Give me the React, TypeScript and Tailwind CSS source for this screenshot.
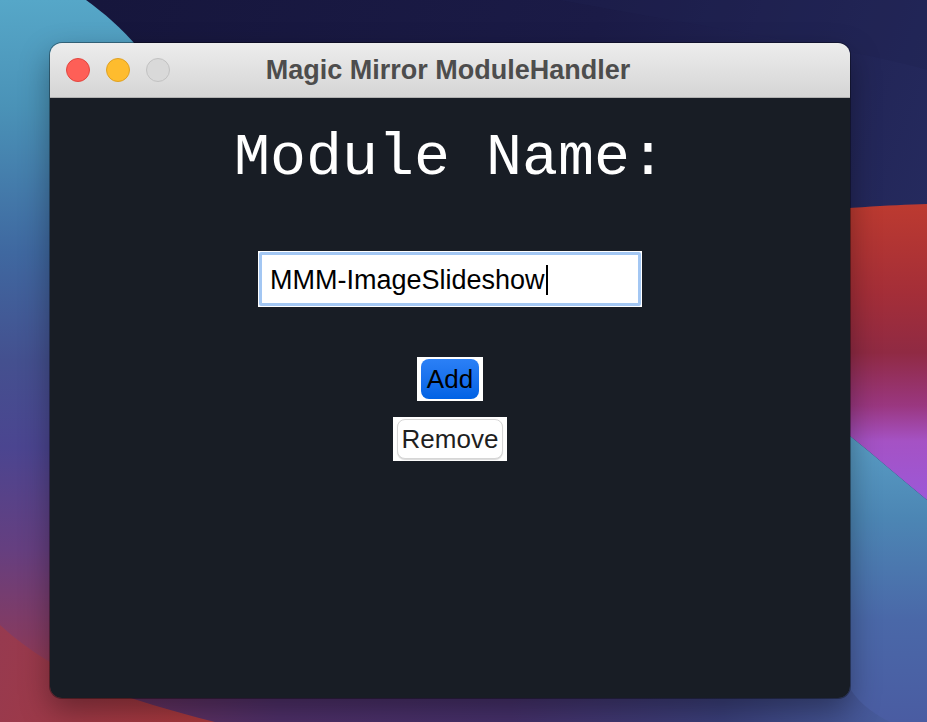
function Wallpaper() {
  return (
    <svg
      className="absolute inset-0"
      width="927"
      height="722"
      viewBox="0 0 927 722"
    >
      <defs>
        <linearGradient id="navy" x1="0" y1="0" x2="1" y2="0.3">
          <stop offset="0" stopColor="#15153a" />
          <stop offset="0.6" stopColor="#1b1b47" />
          <stop offset="1" stopColor="#252a5e" />
        </linearGradient>
        <linearGradient id="leftBand" x1="0" y1="0" x2="0" y2="722" gradientUnits="userSpaceOnUse">
          <stop offset="0" stopColor="#56a7c8" />
          <stop offset="0.15" stopColor="#4a92b7" />
          <stop offset="0.35" stopColor="#3f68a0" />
          <stop offset="0.5" stopColor="#44508f" />
          <stop offset="0.62" stopColor="#4b4590" />
          <stop offset="0.76" stopColor="#653f80" />
          <stop offset="0.88" stopColor="#843b62" />
          <stop offset="1" stopColor="#a8393f" />
        </linearGradient>
        <linearGradient id="redBand" x1="0" y1="205" x2="0" y2="500" gradientUnits="userSpaceOnUse">
          <stop offset="0" stopColor="#bc3a30" />
          <stop offset="0.3" stopColor="#a42e38" />
          <stop offset="0.5" stopColor="#902a43" />
          <stop offset="0.68" stopColor="#9a3780" />
          <stop offset="0.8" stopColor="#a552c4" />
          <stop offset="1" stopColor="#9c58d8" />
        </linearGradient>
        <linearGradient id="cyanBand" x1="0" y1="430" x2="0" y2="722" gradientUnits="userSpaceOnUse">
          <stop offset="0" stopColor="#5a9fc6" />
          <stop offset="0.3" stopColor="#4c86b4" />
          <stop offset="0.65" stopColor="#4a68a8" />
          <stop offset="1" stopColor="#4a5ca2" />
        </linearGradient>
        <linearGradient id="bottomBand" x1="0" y1="0" x2="927" y2="0" gradientUnits="userSpaceOnUse">
          <stop offset="0" stopColor="#7a3358" />
          <stop offset="0.3" stopColor="#4e2f68" />
          <stop offset="0.55" stopColor="#45306a" />
          <stop offset="0.78" stopColor="#3a3f7a" />
          <stop offset="1" stopColor="#4a62a4" />
        </linearGradient>
        <linearGradient id="redCorner" x1="0" y1="620" x2="200" y2="722" gradientUnits="userSpaceOnUse">
          <stop offset="0" stopColor="#963a50" />
          <stop offset="1" stopColor="#a8383c" />
        </linearGradient>
      </defs>
      <rect width="927" height="722" fill="url(#navy)" />
      <path d="M560 0 C 720 30, 860 50, 927 70 L927 0 Z" fill="#20224f" opacity="0.35" />
      <rect x="0" y="680" width="927" height="42" fill="url(#bottomBand)" />
      <path d="M0 0 L86 0 C 120 25, 160 60, 190 140 L120 722 L0 722 Z" fill="url(#leftBand)" />
      <path d="M0 625 C 60 680, 130 700, 215 722 L0 722 Z" fill="url(#redCorner)" />
      <path d="M780 214 C 840 208, 890 205, 927 204 L927 500 C 900 478, 875 456, 850 436 L780 380 Z" fill="url(#redBand)" />
      <path d="M780 380 L850 436 C 875 456, 900 478, 927 500 L927 722 L890 722 C 870 712, 855 700, 845 680 Z" fill="url(#cyanBand)" />
    </svg>
  );
}

function TrafficLights() {
  return (
    <div className="flex items-center gap-[16px] pl-[16px]">
      <span className="w-[24px] h-[24px] rounded-full bg-[#fe5f57] border border-[#e2463f]" />
      <span className="w-[24px] h-[24px] rounded-full bg-[#febc2e] border border-[#dfa123]" />
      <span className="w-[24px] h-[24px] rounded-full bg-[#d9d9d9] border border-[#c2c2c2]" />
    </div>
  );
}

function TitleBar() {
  return (
    <div className="h-[55px] shrink-0 grid grid-cols-[1fr_auto_1fr] items-center border-b border-[#b1b1b1] bg-linear-to-b from-[#ededed] to-[#d5d5d5]">
      <TrafficLights />
      <span className="font-['Liberation_Sans',Arial,sans-serif] font-bold text-[27px] leading-none text-[#4d4d4d] mr-[4px]">
        Magic Mirror ModuleHandler
      </span>
      <span />
    </div>
  );
}

export default function App() {
  return (
    <div className="relative w-[927px] h-[722px] overflow-hidden bg-[#1a1a44]">
      <Wallpaper />
      <div className="absolute left-[50px] top-[43px] w-[800px] h-[655px] rounded-[12px] overflow-hidden flex flex-col shadow-[0_0_0_1px_rgba(0,0,0,0.35),0_12px_30px_rgba(0,0,0,0.35)]">
        <TitleBar />
        <main className="flex-1 bg-[#181d25] flex flex-col items-center font-['Liberation_Sans',Arial,sans-serif]">
          <h1 className="mt-[30px] font-['Liberation_Mono','Courier_New',monospace] text-[60px] leading-[60px] text-white">
            Module Name:
          </h1>

          <div className="mt-[63px] w-[384px] h-[56px] bg-white p-[1px]">
            <div className="w-full h-full flex items-center border-[3px] border-[#a3c7f3] rounded-[2px] px-[8px] pt-[2px] text-[27px] text-black">
              <span>MMM-ImageSlideshow</span>
              <span className="ml-[1px] w-[2px] h-[30px] bg-black" />
            </div>
          </div>

          <div className="mt-[50px] bg-white px-[4px] py-[2px]">
            <button className="w-[58px] h-[40px] rounded-[8px] bg-linear-to-b from-[#2b80f6] to-[#0062e4] text-[26px] leading-none text-black">
              Add
            </button>
          </div>

          <div className="mt-[16px] bg-white px-[4px] py-[2px]">
            <button className="w-[106px] h-[40px] rounded-[8px] bg-white border border-[#d6d6d6] shadow-[0_1px_1px_rgba(0,0,0,0.15)] text-[26px] leading-none text-[#1f1f1f]">
              Remove
            </button>
          </div>
        </main>
      </div>
    </div>
  );
}
